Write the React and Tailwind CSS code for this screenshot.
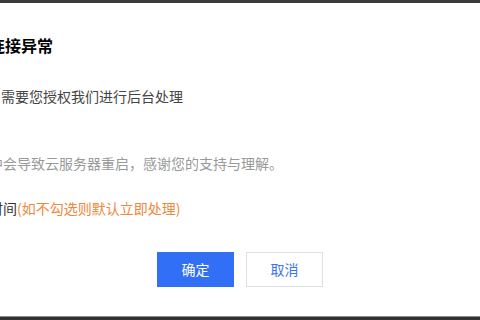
export default function App() {
  return (
    <div
      className="flex h-[320px] w-[480px] flex-col overflow-hidden bg-white"
      style={{ fontFamily: '"Noto Sans CJK SC", "Noto Sans", sans-serif' }}
    >
      <div className="h-[3px] w-full bg-[#3b3b3b]" />

      <div className="flex flex-1 flex-col">
        <div className="-ml-[11px] mt-[30px] whitespace-nowrap">
          <h2 className="text-[16px] font-bold leading-[24px] text-[#000]">连接异常</h2>
          <p className="mt-[28px] pl-[12px] text-[14px] leading-[22px] text-[#444]">
            需要您授权我们进行后台处理
          </p>
          <p className="mt-[45px] text-[14px] leading-[22px] text-[#999]">
            中会导致云服务器重启，感谢您的支持与理解。
          </p>
          <p className="mt-[23px] text-[14px] leading-[22px] text-[#333]">
            时间<span className="text-[#f0873a]">(如不勾选则默认立即处理)</span>
          </p>
        </div>

        <div className="mt-[33px] flex justify-center gap-[12px]">
          <button
            type="button"
            className="h-[35px] w-[77px] bg-[#316ff6] text-[14px] text-white"
          >
            确定
          </button>
          <button
            type="button"
            className="h-[35px] w-[77px] border border-[#dbe0e8] bg-white text-[14px] text-[#3a74f3]"
          >
            取消
          </button>
        </div>
      </div>

      <div className="h-[1px] w-full bg-[#8a8a8a]" />
      <div className="h-[3px] w-full bg-[#333333]" />
    </div>
  )
}
